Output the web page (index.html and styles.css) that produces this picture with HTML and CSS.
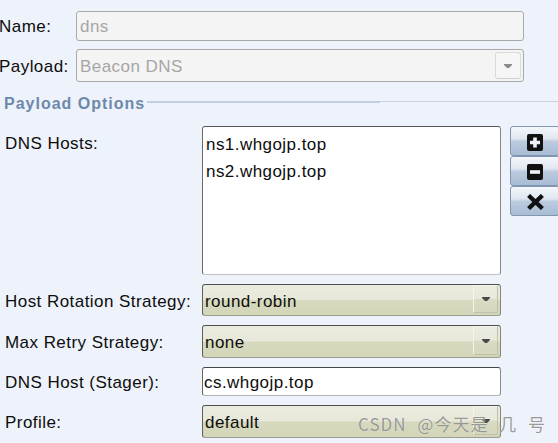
FILE: index.html
```html
<!DOCTYPE html>
<html>
<head>
<meta charset="utf-8">
<link rel="stylesheet" href="styles.css">
</head>
<body>
<div class="page">
  <div class="top-row name-row">
    <div class="top-lbl">Name:</div>
    <div class="dis-field">dns</div>
  </div>
  <div class="top-row">
    <div class="top-lbl">Payload:</div>
    <div class="dis-combo">
      <span class="dis-text">Beacon DNS</span>
      <span class="dis-btn"><svg width="8" height="4" viewBox="0 0 8 4"><path d="M0 0h8v1l-3 3h-2l-3-3z" fill="#8a8a8a"/></svg></span>
    </div>
  </div>
  <div class="section-head">
    <span class="section-title">Payload Options</span>
    <div class="rule"><span class="rule-a"></span><span class="rule-b"></span></div>
  </div>
  <div class="options">
    <div class="lbl lbl-combo">DNS Hosts:</div>
    <div class="list">
      <div class="list-item">ns1.whgojp.top</div>
      <div class="list-item">ns2.whgojp.top</div>
    </div>
    <div class="tools">
      <div class="tool"><svg class="ico" width="16" height="17" viewBox="0 0 16 17"><rect width="16" height="17" rx="2" fill="#111"/><path d="M6.2 3.5h3.6v3.2h3.2v3.6H9.8v3.2H6.2v-3.2H3V6.7h3.2z" fill="#f0f4fa"/></svg></div>
      <div class="tool"><svg class="ico" width="16" height="16" viewBox="0 0 16 16"><rect width="16" height="16" rx="2" fill="#111"/><rect x="3" y="6.2" width="10" height="3.6" fill="#f0f4fa"/></svg></div>
      <div class="tool"><svg class="ico" width="17" height="16" viewBox="0 0 17 16"><path d="M3.2 3L13.8 13M13.8 3L3.2 13" stroke="#111" stroke-width="4.4" stroke-linecap="square"/></svg></div>
    </div>

    <div class="lbl lbl-combo">Host Rotation Strategy:</div>
    <div class="combo">
      <span class="combo-text">round-robin</span>
      <span class="combo-btn"><svg width="8" height="4" viewBox="0 0 8 4"><path d="M0 0h8v1l-3 3h-2l-3-3z" fill="#4a4a4a"/></svg></span>
    </div>
    <div class="spacer"></div>

    <div class="lbl lbl-combo">Max Retry Strategy:</div>
    <div class="combo">
      <span class="combo-text">none</span>
      <span class="combo-btn"><svg width="8" height="4" viewBox="0 0 8 4"><path d="M0 0h8v1l-3 3h-2l-3-3z" fill="#4a4a4a"/></svg></span>
    </div>
    <div class="spacer"></div>

    <div class="lbl lbl-text">DNS Host (Stager):</div>
    <div class="text-field">cs.whgojp.top</div>
    <div class="spacer"></div>

    <div class="lbl lbl-combo">Profile:</div>
    <div class="combo">
      <span class="combo-text">default</span>
      <span class="combo-btn"><svg width="8" height="4" viewBox="0 0 8 4"><path d="M0 0h8v1l-3 3h-2l-3-3z" fill="#4a4a4a"/></svg></span>
    </div>
    <div class="spacer"></div>
  </div>
</div>
<div class="watermark">CSDN @今天是 几 号</div>
</body>
</html>
```
FILE: styles.css
```css
* { box-sizing: border-box; }
html, body { margin: 0; padding: 0; }
body {
  width: 558px;
  height: 443px;
  overflow: hidden;
  position: relative;
  background: #eef2fa;
  font-family: "Liberation Sans", Arial, sans-serif;
  font-size: 17px;
  letter-spacing: 0.45px;
  color: #0d0d0d;
}
.page { padding-top: 11px; }

.top-row { display: flex; align-items: baseline; }
.name-row { margin-bottom: 8px; }
.top-lbl { width: 77px; margin-left: -1px; line-height: 20px; }

.dis-field {
  width: 448px;
  height: 30px;
  border: 1px solid #a9a9a9;
  border-radius: 3px;
  background: #f4f4f4;
  color: #a6a6a6;
  padding: 5px 3px 0 3px;
  line-height: 20px;
}
.dis-combo {
  width: 448px;
  height: 33px;
  border: 1px solid #a9a9a9;
  border-radius: 3px;
  background: #f4f4f4;
  color: #a6a6a6;
  padding: 2px;
  display: flex;
}
.dis-text { flex: 1; padding: 5px 0 0 1px; line-height: 20px; }
.dis-btn {
  width: 26px;
  border: 1px solid #dadada;
  border-bottom-color: #cfcfcf;
  border-radius: 3px;
  background: #f5f5f5;
  display: flex;
  align-items: center;
  justify-content: center;
}

.section-head { display: flex; align-items: flex-start; margin-top: 13px; height: 18px; }
.section-title {
  padding-left: 4px;
  font-weight: bold;
  font-size: 16px;
  letter-spacing: 1px;
  line-height: 18px;
  color: #6c89ab;
}
.rule { flex: 1; display: flex; align-items: flex-start; margin-top: 6px; margin-left: 2px; }
.rule-a { width: 233px; height: 2px; background: #c1cee0; }
.rule-b { flex: 1; height: 1px; background: #c7d1e0; }

.options {
  margin-top: 13px;
  padding-left: 5px;
  display: grid;
  grid-template-columns: 197px 299px auto;
  grid-template-rows: 149px 32px 33px 29px 33px;
  row-gap: 9px;
  align-items: stretch;
}
.lbl { line-height: 20px; white-space: nowrap; align-self: start; }
.lbl-combo { padding-top: 8px; }
.lbl-text { padding-top: 6px; }

.list {
  background: #fff;
  border: 1px solid;
  border-color: #575757 #858585 #c2c2c2 #6a6a6a;
  border-radius: 3px;
  padding: 4px 3px 0 3px;
  line-height: 27px;
}

.tools { align-self: start; margin-left: 9px; width: 50px; display: flex; flex-direction: column; }
.tool {
  height: 30px;
  border: 1px solid #8196b3;
  border-radius: 3px;
  background: linear-gradient(#f4f7fb 0%, #dfe6f0 42%, #bccbdf 52%, #a8bcd5 100%);
  display: flex;
  justify-content: center;
  align-items: center;
  padding-top: 2px;
}
.ico { flex: none; display: block; }

.combo {
  border: 1px solid;
  border-color: #4f4f4f #85857a #9c9c90 #5f5f58;
  border-radius: 3px;
  background: linear-gradient(#ebecdf 0%, #e7e8d9 48%, #d6d9bd 52%, #d3d6b9 100%);
  padding: 0 2px 2px 1px;
  display: flex;
}
.combo-text { flex: 1; padding: 7px 0 0 1px; line-height: 20px; }
.combo-btn {
  width: 25px;
  border: 1px solid #f4f5ec;
  border-right-color: #bfc1aa;
  border-bottom-color: #bfc1aa;
  border-radius: 2px;
  background: linear-gradient(#ecede1 0%, #e8e9db 48%, #d9dbc2 52%, #d5d8bc 100%);
  display: flex;
  align-items: center;
  justify-content: center;
}
.text-field {
  background: #fff;
  border: 1px solid;
  border-color: #454545 #8a8a8a #b3b3b3 #666;
  border-radius: 3px;
  padding: 5px 3px 0 1px;
  line-height: 20px;
}

.watermark {
  position: absolute;
  left: 358px;
  top: 411px;
  font-family: "Noto Sans CJK SC", sans-serif;
  font-size: 17px;
  letter-spacing: 1px;
  word-spacing: 6px;
  color: rgba(110, 110, 110, 0.7);
  text-shadow: 0 0 1px rgba(255,255,255,0.8);
}
```
